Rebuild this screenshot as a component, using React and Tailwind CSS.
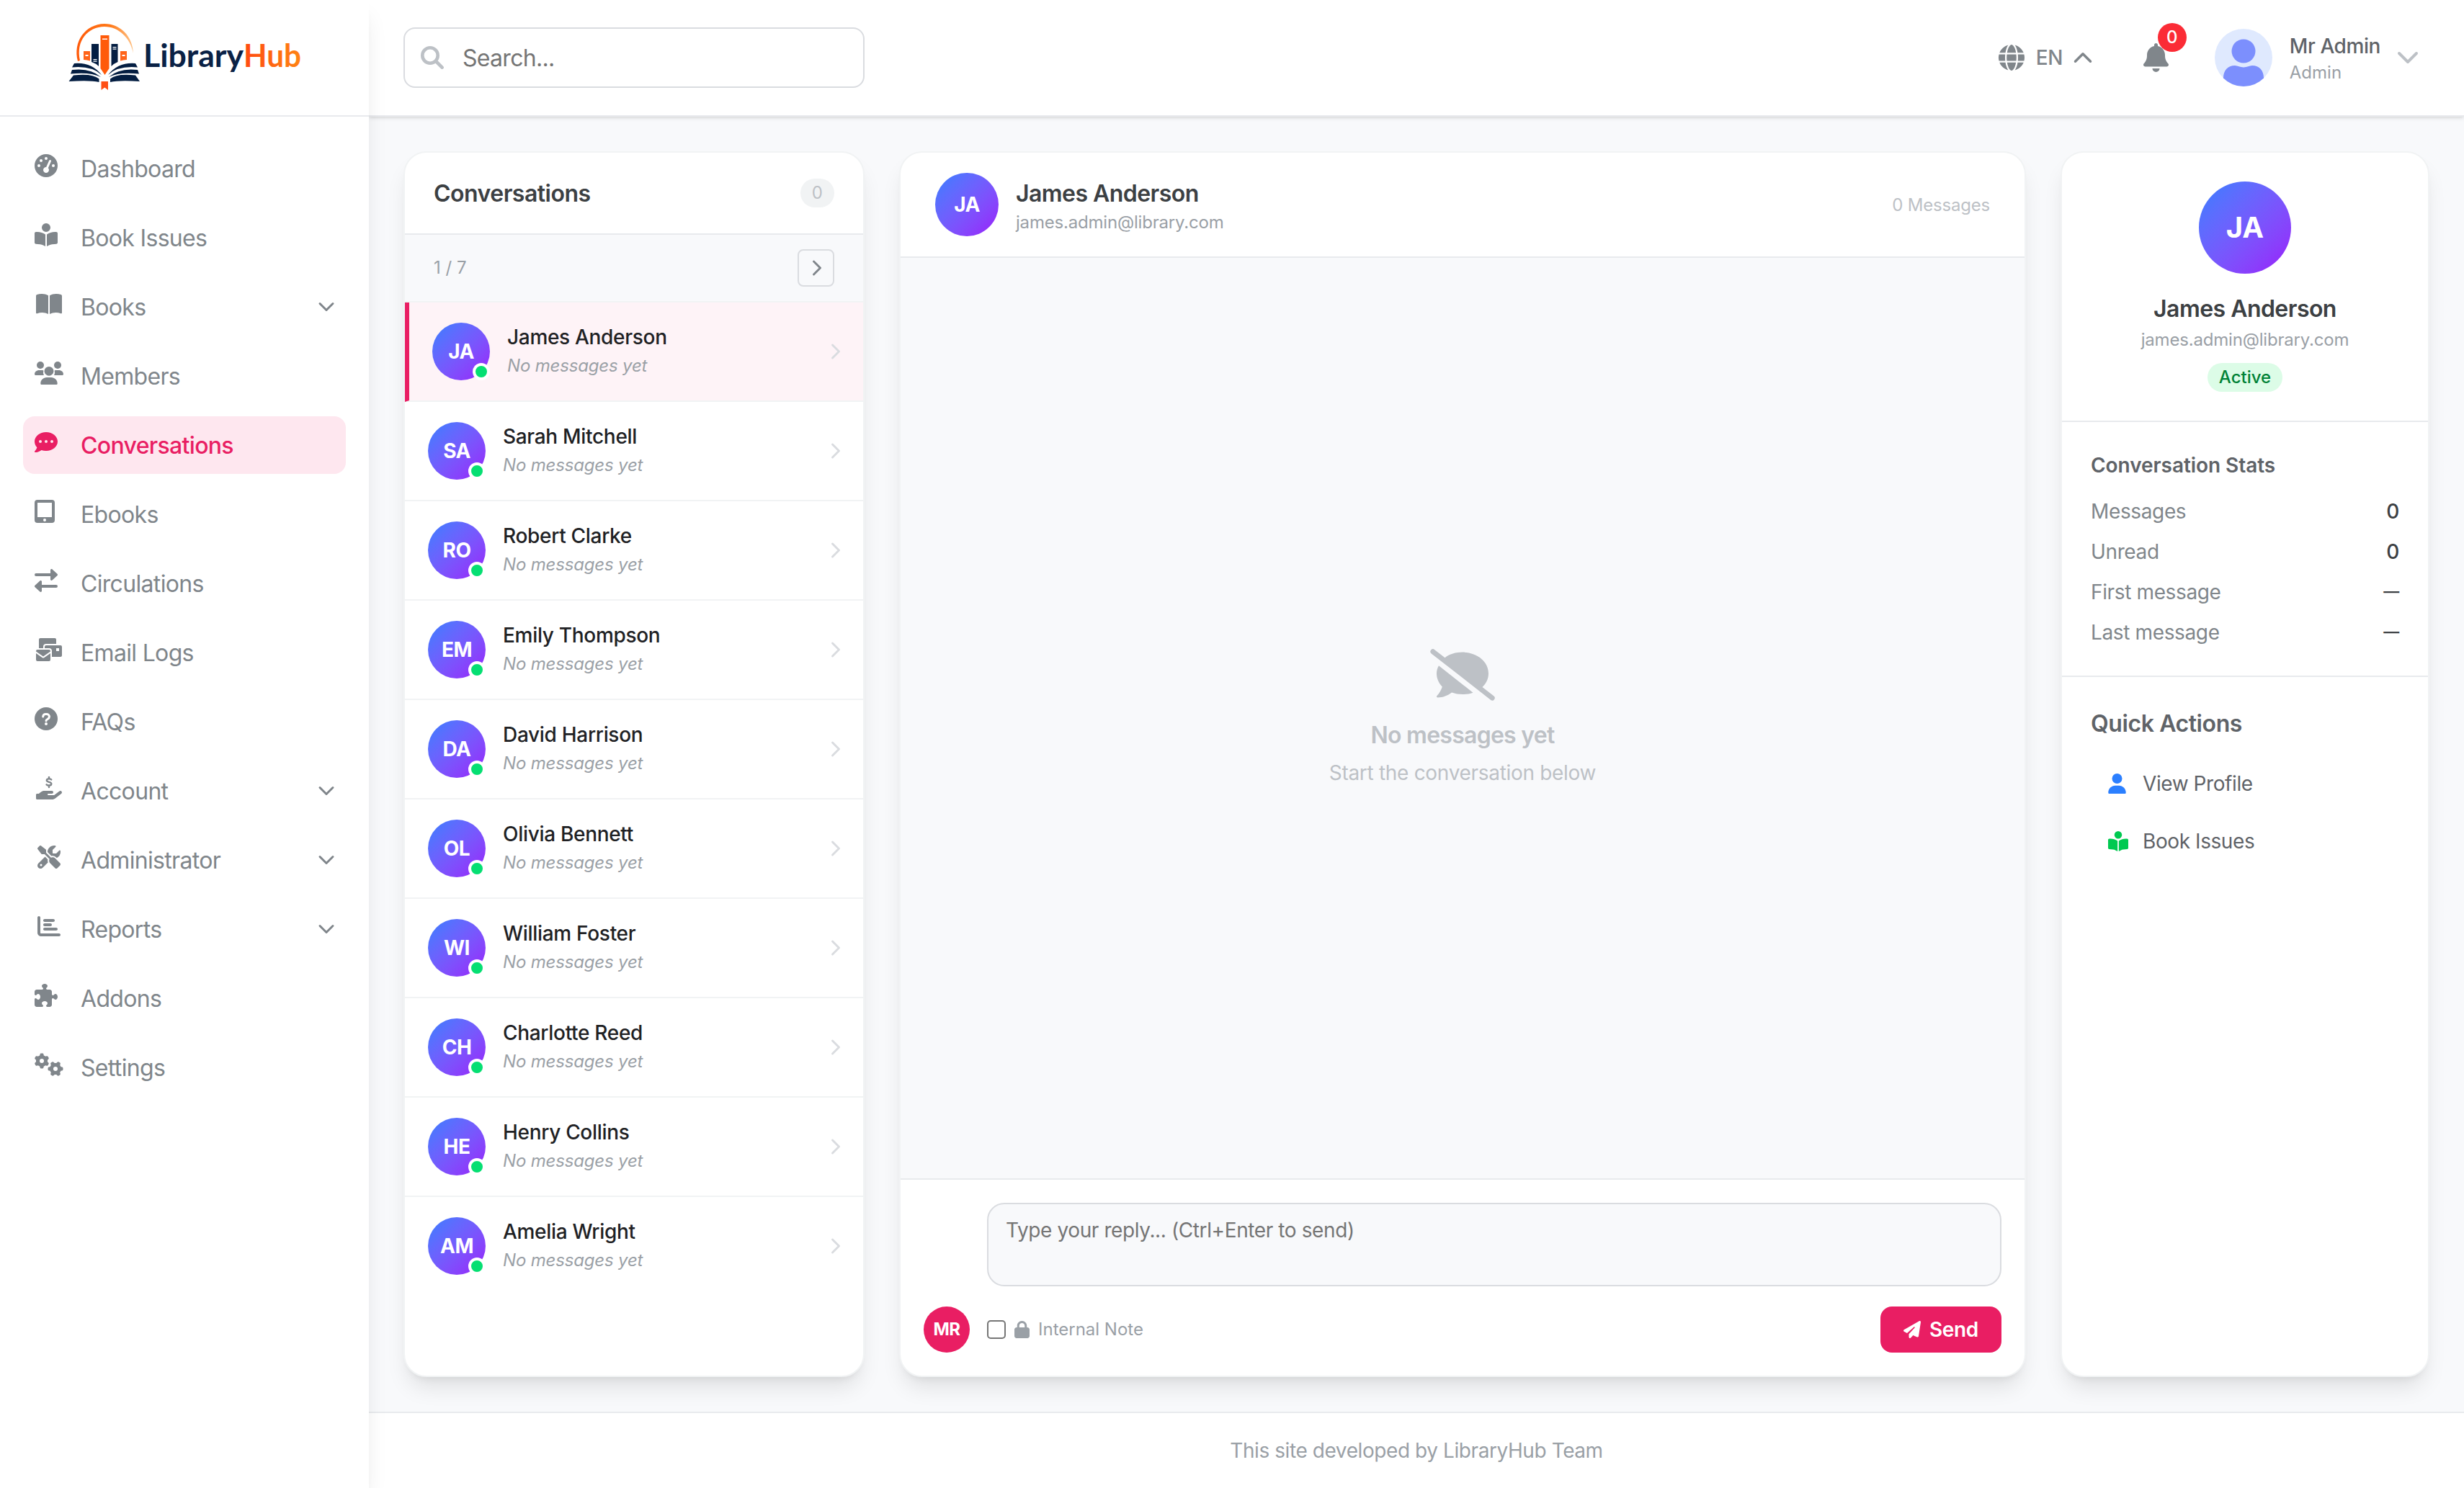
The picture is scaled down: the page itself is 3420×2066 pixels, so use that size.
import {
  FaBell,
  FaBookOpenReader,
  FaChartBar,
  FaGaugeHigh,
  FaGears,
  FaGlobe,
  FaLock,
  FaPaperPlane,
  FaPuzzlePiece,
  FaScrewdriverWrench,
  FaUser,
} from "react-icons/fa6";

const BookOpenIcon = ({ className }) => (
  <svg viewBox="0 0 36 32" fill="currentColor" className={className}>
    <path d="M0 5C0 4 .6 3.4 1.4 3 3.4 2.3 5.700 2 8 2c3.200 0 6.400.8 9 2.300V30c-2.600-1.300-5.500-2-8.500-2-2.300 0-4.700.5-6.900 1.300C.8 29.600 0 29 0 28.200z" />
    <path d="M36 5c0-1-.6-1.600-1.400-2C32.600 2.300 30.300 2 28 2c-3.200 0-6.400.8-9 2.300V30c2.600-1.300 5.500-2 8.500-2 2.300 0 4.700.5 6.900 1.300.8.3 1.600-.3 1.600-1.100z" />
  </svg>
);

const UsersIcon = ({ className }) => (
  <svg viewBox="0 0 40 32" fill="currentColor" className={className}>
    <circle cx="8" cy="5" r="5" />
    <circle cx="32" cy="5" r="5" />
    <circle cx="20" cy="13.300" r="6.400" />
    <path d="M0 17.600C0 14.300 2.700 12 6.500 12H10c.9 0 1.600.1 2.300.4a9.500 9.500 0 0 0 .6 6.600H1.400C.6 19 0 18.400 0 17.600z" />
    <path d="M40 17.600c0-3.300-2.700-5.600-6.500-5.600H30c-.9 0-1.600.1-2.300.4a9.500 9.500 0 0 1-.6 6.600h11.500c.8 0 1.400-.6 1.400-1.400z" />
    <path d="M8.300 30.400C8.300 25.600 12.100 22 17 22h6c4.900 0 8.700 3.600 8.700 8.400 0 .9-.7 1.600-1.600 1.600H9.900c-.9 0-1.600-.7-1.600-1.600z" />
  </svg>
);

const CommentDotsIcon = ({ className }) => (
  <svg viewBox="0 0 32 32" fill="currentColor" fillRule="evenodd" className={className}>
    <path d="M16 2c8.800 0 16 5.800 16 13s-7.200 13-16 13c-2.300 0-4.500-.4-6.500-1.100C7 28.800 4 30 .8 30 0 30-.3 29.200.2 28.600 1.700 27 2.800 25 3.400 23.300 1.300 21.100 0 18.200 0 15 0 7.800 7.200 2 16 2zM8 13a2 2 0 1 0 0 4 2 2 0 0 0 0-4zm8 0a2 2 0 1 0 0 4 2 2 0 0 0 0-4zm8 0a2 2 0 1 0 0 4 2 2 0 0 0 0-4z" />
  </svg>
);

const TabletIcon = ({ className }) => (
  <svg viewBox="0 0 28 32" fill="currentColor" fillRule="evenodd" className={className}>
    <path d="M4 0h20a4 4 0 0 1 4 4v24a4 4 0 0 1-4 4H4a4 4 0 0 1-4-4V4a4 4 0 0 1 4-4zm0 4v20h20V4zm10 22a2 2 0 1 0 0 4 2 2 0 0 0 0-4z" />
  </svg>
);

const ArrowsIcon = ({ className }) => (
  <svg viewBox="0 0 32 32" fill="currentColor" className={className}>
    <path d="M22 1.500c0-1.300 1.600-2 2.600-1.100l6.800 6.400c.8.700.8 1.700 0 2.400l-6.800 6.400c-1 .9-2.600.2-2.600-1.100V10H2a2 2 0 1 1 0-4h20z" />
    <path d="M10 17.500c0-1.300-1.600-2-2.600-1.100L.6 22.800c-.8.700-.8 1.700 0 2.400l6.800 6.400c1 .9 2.600.2 2.600-1.100V26h20a2 2 0 1 0 0-4H10z" />
  </svg>
);

const MailBulkIcon = ({ className }) => (
  <svg viewBox="0 0 36 32" fill="currentColor" fillRule="evenodd" className={className}>
    <path d="M6 0h20a2 2 0 0 1 2 2v6H14a4 4 0 0 0-4 4v2H4V2a2 2 0 0 1 2-2z" />
    <path d="M14 10h20a2 2 0 0 1 2 2v12a2 2 0 0 1-2 2H22V18a4 4 0 0 0-4-4h-6v-2a2 2 0 0 1 2-2zm14 4v4h4v-4z" />
    <path d="M2 16h16a2 2 0 0 1 2 2v.600l-10 7-10-7V18a2 2 0 0 1 2-2z" />
    <path d="M0 21l8.900 6.200a2 2 0 0 0 2.200 0L20 21v9a2 2 0 0 1-2 2H2a2 2 0 0 1-2-2z" />
  </svg>
);

const QuestionIcon = ({ className }) => (
  <svg viewBox="0 0 32 32" className={className}>
    <circle cx="16" cy="16" r="16" fill="currentColor" />
    <path
      d="M11.700 13c0-2.100 1.600-3.500 3.600-3.500h1.400c2.100 0 3.800 1.600 3.800 3.600 0 2.300-1.500 2.800-3 3.700-.9.500-1.500 1-1.500 2"
      fill="none"
      stroke="#fff"
      strokeWidth="3"
      strokeLinecap="round"
    />
    <circle cx="16" cy="23" r="2" fill="#fff" />
  </svg>
);

const HandDollarIcon = ({ className }) => (
  <svg viewBox="0 0 36 32" fill="none" className={className}>
    <path
      d="M21.200 4.400c-.8-.7-1.900-1-3.200-1-2 0-3.200.9-3.200 2.200 0 3 6.500 1.500 6.500 4.600 0 1.400-1.300 2.300-3.200 2.300-1.500 0-2.800-.5-3.500-1.200M18 .9v2.400M18 12.600v2.500"
      stroke="currentColor"
      strokeWidth="2.400"
      strokeLinecap="round"
    />
    <path
      d="M0 25.500c0-1 .7-1.500 1.600-1.500h2.200l2.900-2.300C8 20.600 9.700 20 11.500 20H22c1.100 0 2 .9 2 2s-.9 2-2 2h-5a1 1 0 0 0 0 2h8.200l6.900-5.300c1.100-.9 2.500-.9 3.300 0 .9 1.100.7 2.500-.4 3.400l-8 6.100c-1.300 1-3 1.800-4.800 1.800H1.500C.6 32 0 31.400 0 30.500z"
      fill="currentColor"
    />
  </svg>
);

const SearchIcon = ({ className }) => (
  <svg viewBox="0 0 32 32" fill="none" stroke="currentColor" strokeWidth="4.600" strokeLinecap="round" className={className}>
    <circle cx="13" cy="13" r="10.700" />
    <path d="M21 21L29.600 29.600" />
  </svg>
);

const CommentSlashIcon = ({ className }) => (
  <svg viewBox="0 0 90 72" fill="currentColor" className={className}>
    <path d="M1.100 1.500a3.500 3.500 0 0 1 4.900-.6L20.600 12.200C26.800 7.300 35.500 4.600 45 4.600c20 0 36 12.800 36 29.300 0 7.400-3.200 14-8.500 19L88.600 65.400a3.500 3.500 0 0 1-4.300 5.500L1.700 6.400a3.500 3.500 0 0 1-.6-4.900z" />
    <path d="M12 23.200L59.500 60.700C55 62.300 50 63.100 45 63.100c-5.300 0-10.300-.8-15-2.500-5.600 4.400-12.300 6.900-19.500 6.900-1.500 0-2-1.200-1-2.400 3.400-3.700 6-8.500 7.300-12.700C12 47.300 9 40.900 9 33.900c0-3.700 1.100-7.300 3-10.700z" />
  </svg>
);

// chevron strokes share one path, rotated by the caller
const Chevron = ({ className }) => (
  <svg
    viewBox="0 0 24 24"
    fill="none"
    stroke="currentColor"
    strokeWidth="3"
    strokeLinecap="round"
    strokeLinejoin="round"
    className={className}
  >
    <path d="M3 7.500L12 16.500L21 7.500" />
  </svg>
);

const Logo = () => (
  <svg viewBox="0 0 350 120" className="h-[120px] w-[350px]">
    <defs>
      <linearGradient id="arc" x1="0" y1="0" x2="1" y2="0">
        <stop offset="0" stopColor="#ff5a0a" />
        <stop offset=".6" stopColor="#ff7a1a" />
        <stop offset="1" stopColor="#ffc58a" />
      </linearGradient>
      <linearGradient id="hub" x1="0" y1="0" x2="1" y2="0">
        <stop offset="0" stopColor="#ff4a10" />
        <stop offset="1" stopColor="#ff8412" />
      </linearGradient>
    </defs>
    <path
      d="M28 65C21 38 38 13.500 65 13C87 13 104 30 105 54C101 33 85 17 65 17C42 17.500 25 36 31 64z"
      fill="url(#arc)"
    />
    <g fill="#ff641a">
      <path d="M36 51h9v13.500q-4-1.200-9-1.500z" />
      <path d="M87 51h9v12q-5 .3-9 1.500z" />
      <path d="M59.500 29h12v46L65.500 84l-6-9z" fill="#ff5a0a" />
      <path d="M60.500 93h9.500v12l-4.700-3.500L60.500 105z" fill="#ff4f14" />
    </g>
    <g fill="#041e42">
      <path d="M47 41h10v31q-4-4-10-6z" />
      <path d="M74.500 41h9v25q-5 2-9 6z" />
      <path d="M23 68q24-2 38 16q-14-13-41-10.500z" />
      <path d="M20 77q26-3 40 10q-15-7.500-42-4.500z" />
      <path d="M22 84.500q26-3 35.500 5V94q-12-3-42-1z" />
      <path d="M108 68q-24-2-38 16q14-13 41-10.500z" />
      <path d="M111 77q-26-3-40 10q15-7.500 42-4.500z" />
      <path d="M108 84.500q-26-3-35 5V94q12-3 41-1z" />
    </g>
    <g fill="#fff">
      <path d="M62 33.500h7v1.500h-7zM38.500 56h4v2h-4zM89.500 56h4v2h-4zM49.500 62h5v1.200h-5zM49.500 64.500h5v1.200h-5zM76.500 45h5v1.200h-5zM76.500 47.500h5v1.200h-5z" />
    </g>
    <text
      x="119"
      y="73"
      fontFamily="Lato"
      fontWeight="700"
      fontSize="44"
      fill="#0a2145"
      textLength="139"
      lengthAdjust="spacingAndGlyphs"
    >
      Library
    </text>
    <text
      x="258"
      y="73"
      fontFamily="Lato"
      fontWeight="700"
      fontSize="44"
      fill="url(#hub)"
      textLength="80"
      lengthAdjust="spacingAndGlyphs"
    >
      Hub
    </text>
  </svg>
);

const menu = [
  { label: "Dashboard", icon: FaGaugeHigh, size: "w-8" },
  { label: "Book Issues", icon: FaBookOpenReader, size: "w-8" },
  { label: "Books", icon: BookOpenIcon, size: "ml-0.5 w-9", sub: true },
  { label: "Members", icon: UsersIcon, size: "w-10" },
  { label: "Conversations", icon: CommentDotsIcon, size: "w-8", active: true },
  { label: "Ebooks", icon: TabletIcon, size: "w-7" },
  { label: "Circulations", icon: ArrowsIcon, size: "w-8" },
  { label: "Email Logs", icon: MailBulkIcon, size: "ml-0.5 w-9" },
  { label: "FAQs", icon: QuestionIcon, size: "w-8" },
  { label: "Account", icon: HandDollarIcon, size: "ml-0.5 w-9", sub: true },
  { label: "Administrator", icon: FaScrewdriverWrench, size: "ml-1 w-8", sub: true },
  { label: "Reports", icon: FaChartBar, size: "ml-1 w-8", sub: true },
  { label: "Addons", icon: FaPuzzlePiece, size: "w-8" },
  { label: "Settings", icon: FaGears, size: "w-10" },
];

const people = [
  ["JA", "James Anderson"],
  ["SA", "Sarah Mitchell"],
  ["RO", "Robert Clarke"],
  ["EM", "Emily Thompson"],
  ["DA", "David Harrison"],
  ["OL", "Olivia Bennett"],
  ["WI", "William Foster"],
  ["CH", "Charlotte Reed"],
  ["HE", "Henry Collins"],
  ["AM", "Amelia Wright"],
];

const stats = [
  ["Messages", "0"],
  ["Unread", "0"],
  ["First message", "—"],
  ["Last message", "—"],
];

const card =
  "flex flex-col overflow-hidden rounded-[32px] border-2 border-[#f1f3f4] bg-white shadow-[0_20px_30px_-6px_rgba(0,0,0,0.1),0_8px_12px_-8px_rgba(0,0,0,0.1)]";
const gradient = "flex items-center justify-center rounded-full bg-linear-to-br from-[#2b7fff] to-[#9810fa] text-white";

const Sidebar = () => (
  <aside className="relative z-20 flex w-[512px] shrink-0 flex-col bg-white shadow-[0_20px_30px_-6px_rgba(0,0,0,0.1),0_8px_12px_-8px_rgba(0,0,0,0.1)]">
    <div className="flex h-[162px] items-start border-b-2 border-[#e8eaed] pt-5 pl-20">
      <Logo />
    </div>
    <nav className="flex flex-col gap-4 px-8 pt-8">
      {menu.map(({ label, icon: Icon, size, sub, active }) => (
        <a
          key={label}
          className={
            active
              ? "flex h-20 items-center rounded-2xl bg-[#fee7ef] px-4 font-medium text-[#e91e63]"
              : "flex h-20 items-center rounded-2xl px-4 text-[#80868b]"
          }
        >
          <span className="mb-2 flex w-16 items-center">
            <Icon className={`h-8 ${size}`} />
          </span>
          <span className="flex-1 pt-px text-[32px] leading-[48px] tracking-[-0.021em]">{label}</span>
          {sub && <Chevron className="-mr-px size-6" />}
        </a>
      ))}
    </nav>
  </aside>
);

const Header = () => (
  <header className="relative z-10 flex h-[162px] shrink-0 items-center justify-between border-b-2 border-[#e8eaed] bg-white pr-[62px] pl-12 shadow-[0_2px_6px_0_rgba(0,0,0,0.1),0_2px_4px_-2px_rgba(0,0,0,0.1)]">
    <div className="flex h-[84px] w-[640px] items-center rounded-2xl border-2 border-[#dadce0] pl-[22px]">
      <SearchIcon className="size-8 text-[#bdc1c6]" />
      <span className="ml-[26px] pt-0.5 text-[32px] leading-[48px] tracking-[-0.022em] text-[#757575]">Search...</span>
    </div>
    <div className="flex items-center">
      <FaGlobe className="size-9 text-[#80868b]" />
      <span className="ml-4 text-[28px] leading-10 font-medium tracking-[-0.02em] text-[#80868b]">EN</span>
      <Chevron className="ml-3.5 size-7 rotate-180 text-[#80868b]" />
      <div className="relative ml-[70px]">
        <FaBell className="h-10 w-[35px] text-[#80868b]" />
        <span className="absolute -top-7 left-5 flex size-10 items-center justify-center rounded-full bg-[#fb2c36] text-2xl font-medium text-white">
          0
        </span>
      </div>
      <svg viewBox="0 0 80 80" className="ml-16 size-20 rounded-full">
        <rect width="80" height="80" fill="#dfe9fe" />
        <circle cx="40" cy="31" r="16.500" fill="#7c8ffd" />
        <path d="M12 68C12 58 18 51 28 51c4 0 7 2.500 12 2.500S48 51 52 51c10 0 16 7 16 17v12H12z" fill="#7c8ffd" />
      </svg>
      <div className="ml-6 flex flex-col">
        <span className="text-[28px] leading-10 font-medium tracking-[-0.015em] text-[#5f6368]">Mr Admin</span>
        <span className="pt-px text-2xl leading-8 text-[#9aa0a6]">Admin</span>
      </div>
      <Chevron className="ml-[22px] size-8 text-[#bdc1c6]" />
    </div>
  </header>
);

const ConversationList = () => (
  <section className={`${card} w-[640px] shrink-0`}>
    <div className="flex h-[114px] shrink-0 items-center justify-between border-b-2 border-[#e8eaed] px-10">
      <h2 className="pt-0.5 text-[32px] leading-[48px] font-semibold tracking-[-0.016em] text-[#3c4043]">
        Conversations
      </h2>
      <span className="rounded-full bg-[#f1f3f4] px-4 py-1 text-2xl leading-8 text-[#bdc1c6]">0</span>
    </div>
    <div className="flex h-[94px] shrink-0 items-center justify-between border-b-2 border-[#f1f3f4] bg-[#f8f9fb] px-10">
      <span className="text-2xl text-[#9aa0a6]">1 / 7</span>
      <span className="flex h-[52px] w-[51px] items-center justify-center rounded-lg border-2 border-[#dadce0] pl-0.5">
        <Chevron className="size-6 -rotate-90 text-[#80868b]" />
      </span>
    </div>
    {people.map(([initials, name], i) => (
      <div
        key={name}
        className={
          i === 0
            ? "flex h-[138px] shrink-0 items-center border-b-2 border-l-6 border-b-[#f1f3f4] border-l-[#e91e63] bg-[#fef3f7] px-8"
            : "flex h-[138px] shrink-0 items-center border-b-2 border-[#f1f3f4] px-8 last:border-transparent"
        }
      >
        <div className="relative">
          <div className={`${gradient} size-20 text-[28px] font-bold tracking-[-0.02em]`}>{initials}</div>
          <span className="absolute right-0 bottom-0 size-6 rounded-full border-4 border-white bg-[#05df72]" />
        </div>
        <div className="ml-6 flex flex-1 flex-col">
          <span className="text-[28px] leading-10 font-medium tracking-[-0.011em] text-[#202124]">{name}</span>
          <span className="text-2xl leading-10 tracking-[-0.007em] text-[#9aa0a6] italic">No messages yet</span>
        </div>
        <Chevron className="mr-[-6px] size-6 -rotate-90 text-[#dadce0]" />
      </div>
    ))}
  </section>
);

const ChatPanel = () => (
  <section className={`${card} flex-1`}>
    <div className="flex h-[146px] items-center border-b-2 border-[#e8eaed] px-12">
      <div className={`${gradient} size-[88px] text-[28px] font-bold tracking-[-0.02em]`}>JA</div>
      <div className="ml-6 flex flex-1 flex-col pt-px">
        <span className="text-[32px] leading-[48px] font-semibold tracking-[-0.017em] text-[#3c4043]">James Anderson</span>
        <span className="text-2xl leading-8 tracking-[-0.008em] text-[#9aa0a6]">james.admin@library.com</span>
      </div>
      <span className="pt-px text-2xl tracking-[-0.008em] text-[#bdc1c6]">0 Messages</span>
    </div>
    <div className="flex flex-1 flex-col items-center justify-center bg-[#f8f9fb] text-[#bdc1c6]">
      <CommentSlashIcon className="h-[72px] w-[90px]" />
      <p className="mt-6 text-[32px] leading-[48px] font-[560] tracking-[-0.023em]">No messages yet</p>
      <p className="mt-2 text-[28px] leading-10 tracking-[-0.011em]">Start the conversation below</p>
    </div>
    <div className="flex items-end gap-6 border-t-2 border-[#e8eaed] p-8">
      <div className="flex size-16 items-center justify-center rounded-full bg-[#e91e63] text-2xl font-bold tracking-[-0.02em] text-white">
        MR
      </div>
      <div className="flex flex-1 flex-col gap-7">
        <div className="h-[116px] rounded-3xl border-2 border-[#dadce0] bg-[#f8f9fb] px-6 py-4 text-[28px] leading-10 tracking-[-0.014em] text-[#757575]">
          Type your reply... (Ctrl+Enter to send)
        </div>
        <div className="flex items-center">
          <span className="size-[26px] rounded-[5px] border-2 border-[#767676] bg-white" />
          <FaLock className="ml-3 h-6 w-[21px] text-[#9aa0a6]" />
          <span className="ml-3 flex-1 text-2xl text-[#9aa0a6]">Internal Note</span>
          <button className="flex h-16 w-[168px] items-center rounded-2xl bg-[#e91e63] pl-8 text-[28px] font-[560] tracking-[-0.013em] text-white">
            <FaPaperPlane className="mr-3 size-6" />
            Send
          </button>
        </div>
      </div>
    </div>
  </section>
);

const DetailsPanel = () => (
  <section className={`${card} w-[512px] shrink-0`}>
    <div className="flex flex-col items-center border-b-2 border-[#e8eaed] py-10">
      <div className={`${gradient} size-32 text-[40px] font-bold`}>JA</div>
      <span className="mt-[25px] text-[32px] leading-[48px] font-semibold tracking-[-0.017em] text-[#3c4043]">
        James Anderson
      </span>
      <span className="mt-[3px] text-2xl leading-8 tracking-[-0.008em] text-[#9aa0a6]">james.admin@library.com</span>
      <span className="mt-4 rounded-full bg-[#dcfce7] px-4 py-1 text-2xl leading-8 font-medium text-[#008236]">Active</span>
    </div>
    <div className="flex flex-col border-b-2 border-[#e8eaed] p-10 text-[28px] leading-10 tracking-[-0.013em]">
      <h3 className="mb-6 font-semibold tracking-[-0.002em] text-[#5f6368]">Conversation Stats</h3>
      <div className="flex flex-col gap-4">
        {stats.map(([label, value]) => (
          <div key={label} className="flex justify-between">
            <span className="text-[#80868b]">{label}</span>
            {value === "—" ? (
              <span className="text-[22px] leading-[38px] font-semibold text-[#3c4043]">{value}</span>
            ) : (
              <span className="font-medium text-[#3c4043]">{value}</span>
            )}
          </div>
        ))}
      </div>
    </div>
    <div className="flex flex-col p-10">
      <h3 className="mb-[19px] pt-px text-[32px] leading-[48px] font-semibold tracking-[-0.013em] text-[#5f6368]">
        Quick Actions
      </h3>
      <div className="flex h-20 items-center px-6 text-[28px] leading-10 tracking-[-0.015em] text-[#5f6368]">
        <span className="mr-5 w-7">
          <FaUser className="h-7 w-[25px] text-[#2b7fff]" />
        </span>
        View Profile
      </div>
      <div className="flex h-20 items-center px-6 text-[28px] leading-10 tracking-[-0.015em] text-[#5f6368]">
        <FaBookOpenReader className="mr-5 size-7 text-[#00c950]" />
        Book Issues
      </div>
    </div>
  </section>
);

const App = () => (
  <div className="flex h-[2066px] w-[3420px] overflow-hidden bg-[#f8f9fb] font-[Inter,sans-serif]">
    <Sidebar />
    <div className="flex flex-1 flex-col">
      <Header />
      <main className="flex flex-1 gap-12 p-12">
        <ConversationList />
        <ChatPanel />
        <DetailsPanel />
      </main>
      <footer className="flex h-[106px] items-center justify-center border-t-2 border-[#e8eaed] bg-white text-[28px] tracking-[-0.015em] text-[#9aa0a6]">
        This site developed by LibraryHub Team
      </footer>
    </div>
  </div>
);

export default App;
